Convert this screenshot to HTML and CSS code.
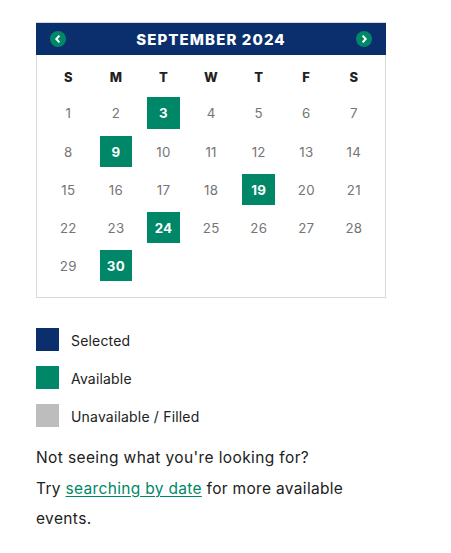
FILE: index.html
```html
<!DOCTYPE html>
<html lang="en">
<head>
<meta charset="utf-8">
<title>Event calendar</title>
<link rel="stylesheet" href="styles.css">
</head>
<body>
<main>
<section class="calendar">
<header class="bar">
<button class="nav" aria-label="Previous month"><svg viewBox="0 0 16 16"><path d="M9.4 4.6 6.3 8l3.1 3.4"/></svg></button>
<h1>SEPTEMBER 2024</h1>
<button class="nav" aria-label="Next month"><svg viewBox="0 0 16 16"><path d="m6.6 4.6 3.1 3.4-3.1 3.4"/></svg></button>
</header>
<div class="week names"><b>S</b><b>M</b><b>T</b><b>W</b><b>T</b><b>F</b><b>S</b></div>
<div class="days">
<span>1</span><span>2</span><span class="open">3</span><span>4</span><span>5</span><span>6</span><span>7</span>
<span>8</span><span class="open">9</span><span>10</span><span>11</span><span>12</span><span>13</span><span>14</span>
<span>15</span><span>16</span><span>17</span><span>18</span><span class="open">19</span><span>20</span><span>21</span>
<span>22</span><span>23</span><span class="open">24</span><span>25</span><span>26</span><span>27</span><span>28</span>
<span>29</span><span class="open">30</span>
</div>
</section>
<ul class="legend">
<li><i class="selected"></i><span>Selected</span></li>
<li><i class="available"></i><span>Available</span></li>
<li><i class="filled"></i><span>Unavailable / Filled</span></li>
</ul>
<p class="help">Not seeing what you're looking for?<br><span class="hint">Try <a href="#">searching by date</a> for more available</span><br>events.</p>
</main>
</body>
</html>
```
FILE: styles.css
```css
* { box-sizing: border-box; }
body { margin: 0; background: #fff; color: #212121; font-family: Inter, sans-serif; }
main { width: 350px; margin: 22px 0 0 36px; }
.calendar { height: 276px; border: 1px solid #d8d8d8; }
.bar { display: flex; align-items: center; justify-content: space-between; height: 32px; margin: 0 -1px; padding: 0 14px; background: #0a2f6c; color: #fff; }
.bar h1 { margin: 0; font-size: 15px; font-weight: 800; letter-spacing: 1.1px; line-height: 32px; padding-top: 1px; }
.nav { width: 16px; height: 16px; padding: 0; border: 0; border-radius: 50%; background: #008768; }
.nav svg { display: block; width: 16px; height: 16px; fill: none; stroke: #fff; stroke-width: 2; }
.week, .days { display: grid; grid-template-columns: repeat(7, 47.6px); width: 333.2px; margin: 0 auto; justify-items: center; }
.names { height: 42.45px; padding-top: 12px; font-size: 13px; line-height: 20px; }
.names b { font-weight: 800; }
.days { row-gap: 6.85px; }
.days span { width: 32.4px; height: 31.3px; text-align: center; line-height: 33px; font-size: 13.3px; letter-spacing: .3px; text-indent: .3px; color: #757575; }
.days .open { background: #008768; color: #fff; font-weight: 700; }
.legend { list-style: none; margin: 30px 0 0; padding: 0; display: grid; row-gap: 15px; }
.legend li { display: flex; align-items: center; gap: 12px; height: 23px; font-size: 14px; letter-spacing: .18px; }
.legend i { width: 23px; height: 23px; }
.legend span { padding-top: 2px; white-space: nowrap; }
.selected { background: #0a2f6c; }
.available { background: #008768; }
.filled { background: #bdbdbd; }
.help { margin: 16px 0 0; font-size: 15.5px; letter-spacing: .38px; line-height: 30.5px; white-space: nowrap; }
.hint { letter-spacing: .32px; }
.help a { color: #008768; text-decoration: underline; text-underline-offset: 2px; text-decoration-thickness: 1px; }
```
